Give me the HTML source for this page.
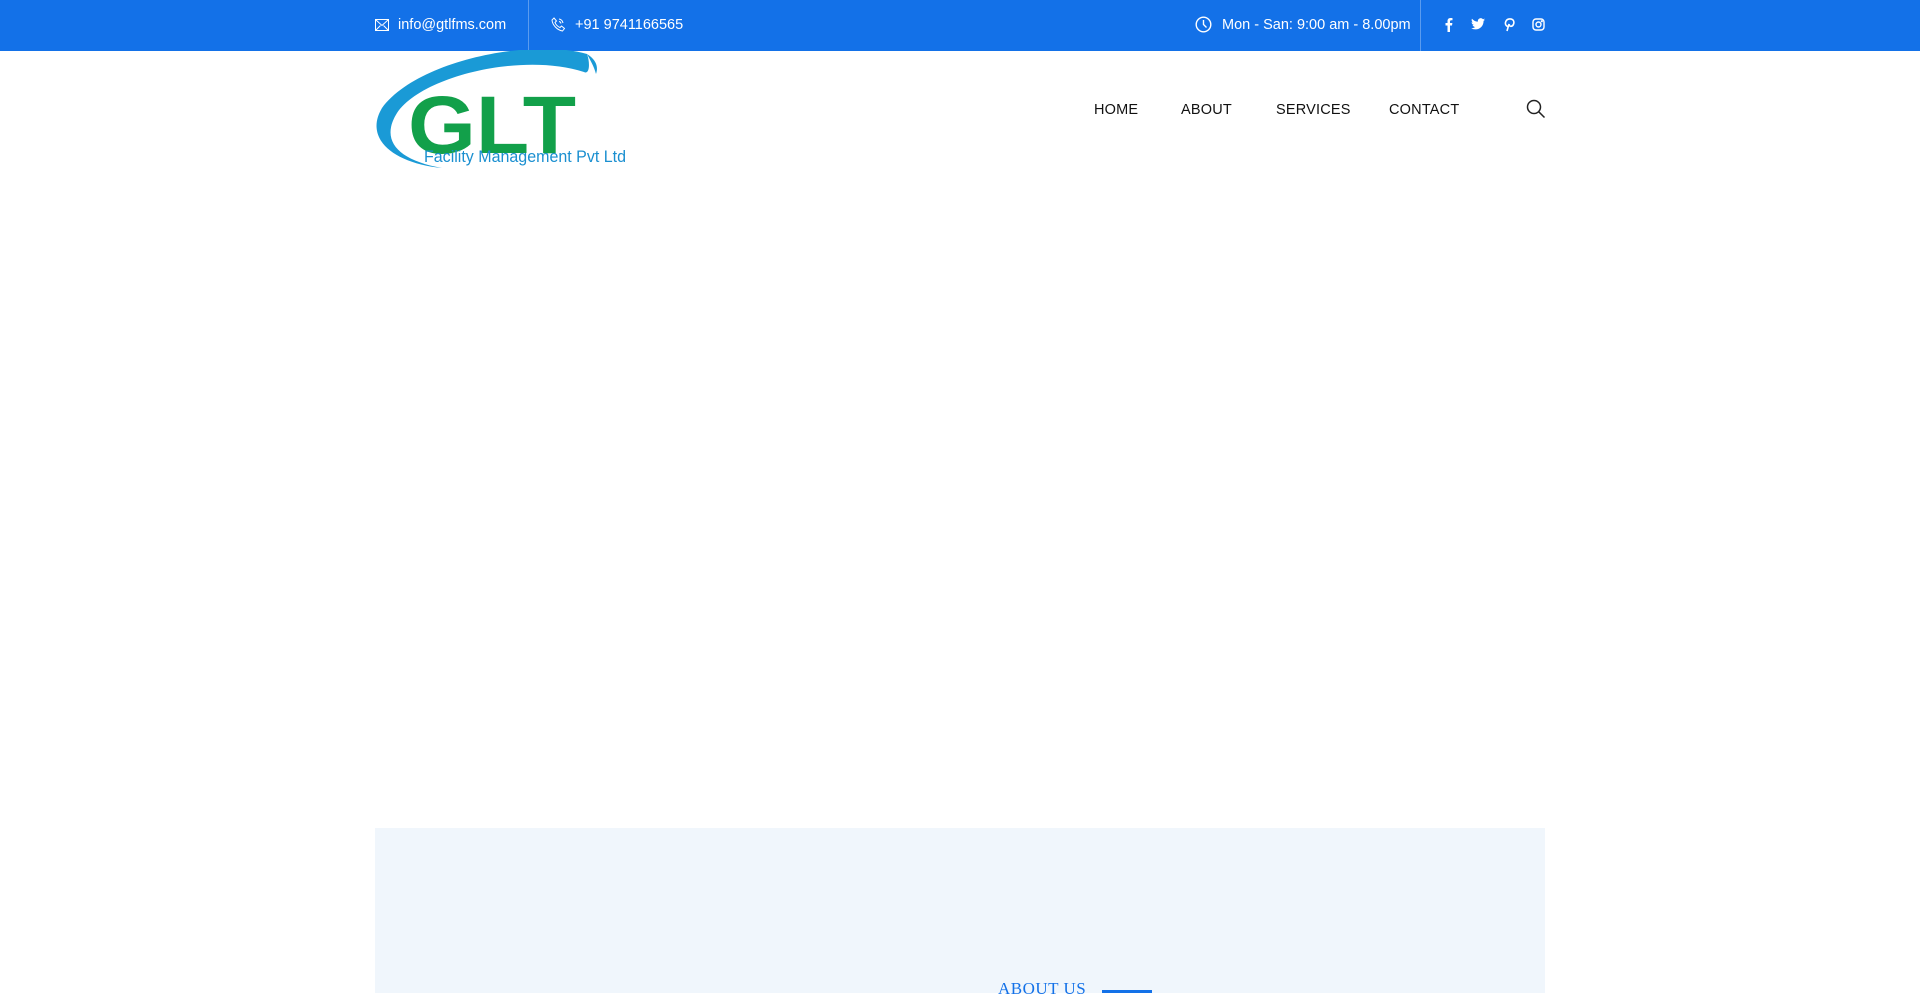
<!DOCTYPE html>
<html><head><meta charset="utf-8"><style>
*{margin:0;padding:0;box-sizing:border-box}
body{width:1920px;height:993px;overflow:hidden;background:#fff;font-family:"Liberation Sans",sans-serif;position:relative}
.top{position:absolute;left:0;top:0;width:1920px;height:51px;background:#1371e8;color:#fff;font-size:14.5px}
.top span{position:absolute;top:16px;line-height:18px}
.top svg{position:absolute}
.div{position:absolute;top:0;width:1px;height:51px;background:rgba(255,255,255,.3)}
.nav a{position:absolute;top:100px;font-size:14.5px;color:#111;text-decoration:none;letter-spacing:.2px;line-height:20px}
.box{position:absolute;left:375px;top:828px;width:1170px;height:165px;background:#f0f6fc}
</style></head><body>
<div class="top">
<svg style="left:375px;top:19px" width="14" height="12" viewBox="0 0 14 12" fill="none" stroke="#fff" stroke-width="1"><rect x=".5" y=".5" width="13" height="11"/><path d="M.5 .5l6.5 6 6.5-6M.5 11.5l5-5M13.5 11.5l-5-5"/></svg>
<span style="left:398px">info@gtlfms.com</span>
<div class="div" style="left:528px"></div>
<svg style="left:551px;top:17px" width="14" height="15" viewBox="0 0 14 15" fill="none" stroke="#fff" stroke-width="1"><path d="M3 1l2.5 3-1.5 1.5c1 2.5 2.5 4 5 5L10.5 9l3 2.5-2 2.5C6 13 1.5 8 1 3z"/><path d="M8 2a5 5 0 0 1 4 4M8 4.5a2.5 2.5 0 0 1 2 2"/></svg>
<span style="left:575px">+91 9741166565</span>
<svg style="left:1195px;top:16px" width="17" height="17" viewBox="0 0 17 17" fill="none" stroke="#fff" stroke-width="1.4"><circle cx="8.5" cy="8.5" r="7.3"/><path d="M8.5 4v4.5l3 3"/></svg>
<span style="left:1222px">Mon - San: 9:00 am - 8.00pm</span>
<div class="div" style="left:1420px"></div>
<svg style="left:1444px;top:17px" width="9" height="15" viewBox="0 0 9 15" fill="#fff"><path d="M6 15V8.5h2l.4-2.5H6V4.5c0-.7.3-1.2 1.3-1.2H8.5V1.1C8 1 7.3 1 6.6 1 4.8 1 3.5 2 3.5 4.1V6H1.5v2.5h2V15z"/></svg>
<svg style="left:1471px;top:18px" width="14" height="12" viewBox="0 0 24 20" fill="#fff"><path d="M24 2.4c-.9.4-1.8.7-2.8.8 1-.6 1.8-1.6 2.2-2.7-1 .6-2 1-3.1 1.2A4.9 4.9 0 0 0 11.9 6C7.8 5.8 4.2 3.9 1.7.9c-1.3 2.3-.4 5 1.5 6.5-.8 0-1.600-.2-2.200-.6 0 2.4 1.7 4.4 3.9 4.8-.7.2-1.5.2-2.2.1.6 2 2.4 3.4 4.6 3.4A9.9 9.9 0 0 1 0 17.1 14 14 0 0 0 7.5 19.3c9.1 0 14.3-7.700 14-14.6 1-.7 1.8-1.5 2.5-2.3z"/></svg>
<svg style="left:1504px;top:17px" width="11" height="15" viewBox="0 0 11 15" fill="none" stroke="#fff" stroke-width="1.6"><path d="M3 14l2-7M3.5 9.5C1.5 8.5 1 6.5 1.8 4.5 3 1.5 8 1 9.5 3.8c1 2-.2 5.7-2.8 5.5-1.5-.1-1.5-1.5-1.300-2.3"/></svg>
<svg style="left:1532px;top:18px" width="13" height="13" viewBox="0 0 13 13" fill="none" stroke="#fff" stroke-width="1.4"><rect x="1" y="1" width="11" height="11" rx="3"/><circle cx="6.5" cy="6.5" r="2.5"/><circle cx="9.8" cy="3.2" r=".4" fill="#fff"/></svg>
</div>
<svg style="position:absolute;left:372px;top:50px" width="260" height="122" viewBox="0 0 260 122">
<path d="M215 4C160-12 45 10 10 58c-18 30 10 55 60 60-45-8-62-28-45-55C50 26 150 2 212 22c6 3 6-10 3-18z" fill="#1a9ad6"/>
<path d="M215 4c8 5 12 12 9 20-2-8-6-14-9-20z" fill="#1a9ad6"/>
<text x="36" y="103" font-family="Liberation Sans" font-weight="bold" font-size="82" fill="#12a04a" textLength="168" lengthAdjust="spacingAndGlyphs">GLT</text>
<text x="52" y="112" font-family="Liberation Sans" font-size="17" fill="#1a8fd0" textLength="202" lengthAdjust="spacingAndGlyphs">Facility Management Pvt Ltd</text>
</svg>
<div class="nav">
<a style="left:1094px">HOME</a><a style="left:1181px">ABOUT</a><a style="left:1276px">SERVICES</a><a style="left:1389px">CONTACT</a>
</div>
<svg style="position:absolute;left:1526px;top:99px" width="20" height="20" viewBox="0 0 20 20" fill="none" stroke="#222" stroke-width="1.5"><circle cx="8" cy="8" r="6.5"/><path d="M12.8 12.8L18.5 18.5"/></svg>
<div class="box"></div>
<div style="position:absolute;left:998px;top:979px;font-family:'Liberation Serif',serif;font-size:17px;color:#1371e8;letter-spacing:.5px">ABOUT US</div>
<div style="position:absolute;left:1102px;top:990px;width:50px;height:3px;background:#1371e8"></div>
</body></html>
